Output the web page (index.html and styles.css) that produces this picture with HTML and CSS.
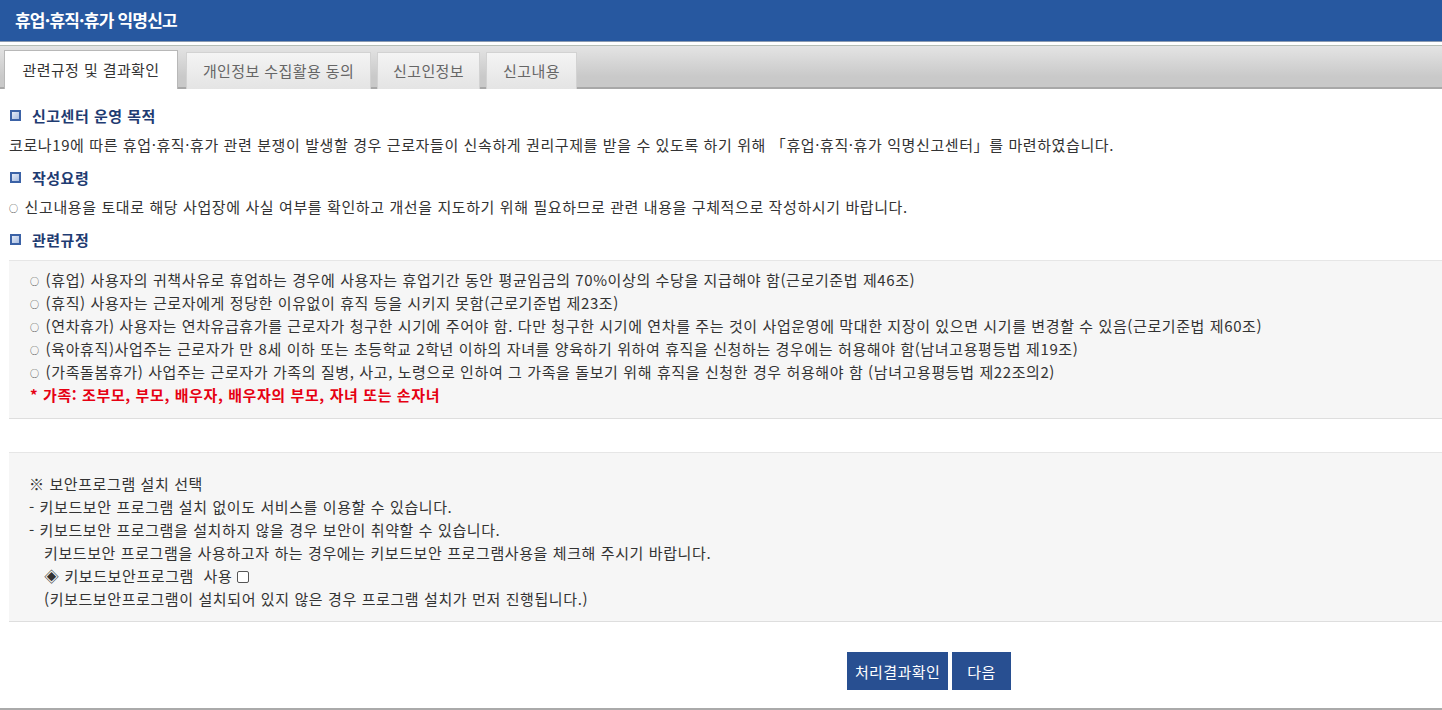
FILE: index.html
```html
<!DOCTYPE html>
<html lang="ko">
<head>
<meta charset="utf-8">
<title>휴업·휴직·휴가 익명신고</title>
<link rel="stylesheet" href="styles.css">
</head>
<body>
<header class="topbar">
  <h1 class="title">휴업·휴직·휴가 익명신고</h1>
</header>
<nav class="tabbar">
  <div class="tab active tab-1">관련규정 및 결과확인</div>
  <div class="tab tab-2">개인정보 수집활용 동의</div>
  <div class="tab tab-3">신고인정보</div>
  <div class="tab tab-4">신고내용</div>
</nav>
<main class="content">
  <h2 class="sec-title"><span class="sq"></span>신고센터 운영 목적</h2>
  <p class="para">코로나19에 따른 휴업·휴직·휴가 관련 분쟁이 발생할 경우 근로자들이 신속하게 권리구제를 받을 수 있도록 하기 위해 「휴업·휴직·휴가 익명신고센터」를 마련하였습니다.</p>
  <h2 class="sec-title"><span class="sq"></span>작성요령</h2>
  <p class="para"><span class="bul">○</span>신고내용을 토대로 해당 사업장에 사실 여부를 확인하고 개선을 지도하기 위해 필요하므로 관련 내용을 구체적으로 작성하시기 바랍니다.</p>
  <h2 class="sec-title"><span class="sq"></span>관련규정</h2>
  <div class="graybox rules">
    <p><span class="bul">○</span>(휴업) 사용자의 귀책사유로 휴업하는 경우에 사용자는 휴업기간 동안 평균임금의 70%이상의 수당을 지급해야 함(근로기준법 제46조)</p>
    <p><span class="bul">○</span>(휴직) 사용자는 근로자에게 정당한 이유없이 휴직 등을 시키지 못함(근로기준법 제23조)</p>
    <p><span class="bul">○</span>(연차휴가) 사용자는 연차유급휴가를 근로자가 청구한 시기에 주어야 함. 다만 청구한 시기에 연차를 주는 것이 사업운영에 막대한 지장이 있으면 시기를 변경할 수 있음(근로기준법 제60조)</p>
    <p><span class="bul">○</span>(육아휴직)사업주는 근로자가 만 8세 이하 또는 초등학교 2학년 이하의 자녀를 양육하기 위하여 휴직을 신청하는 경우에는 허용해야 함(남녀고용평등법 제19조)</p>
    <p><span class="bul">○</span>(가족돌봄휴가) 사업주는 근로자가 가족의 질병, 사고, 노령으로 인하여 그 가족을 돌보기 위해 휴직을 신청한 경우 허용해야 함 (남녀고용평등법 제22조의2)</p>
    <p class="red">* 가족: 조부모, 부모, 배우자, 배우자의 부모, 자녀 또는 손자녀</p>
  </div>
  <div class="graybox security">
    <p>※ 보안프로그램 설치 선택</p>
    <p>- 키보드보안 프로그램 설치 없이도 서비스를 이용할 수 있습니다.</p>
    <p>- 키보드보안 프로그램을 설치하지 않을 경우 보안이 취약할 수 있습니다.</p>
    <p class="indent">키보드보안 프로그램을 사용하고자 하는 경우에는 키보드보안 프로그램사용을 체크해 주시기 바랍니다.</p>
    <p class="indent">◈ 키보드보안프로그램&nbsp; 사용 <span class="chk"></span></p>
    <p class="indent">(키보드보안프로그램이 설치되어 있지 않은 경우 프로그램 설치가 먼저 진행됩니다.)</p>
  </div>
  <div class="actions">
    <button class="btn btn-wide">처리결과확인</button>
    <button class="btn btn-narrow">다음</button>
  </div>
</main>
</body>
</html>
```
FILE: styles.css
```css
* { box-sizing: border-box; }
html, body { margin: 0; padding: 0; }
body {
  width: 1442px;
  height: 710px;
  overflow: hidden;
  font-family: "Noto Sans CJK KR", "Noto Sans", sans-serif;
  font-size: 15px;
  letter-spacing: 0.6px;
  color: #333;
  background: #fff;
  border-bottom: 2px solid #aaa;
}
.topbar {
  height: 42px;
  background: #2758a0;
  border-bottom: 1px solid #8a9ab0;
  display: flex;
  align-items: center;
  padding-left: 15px;
}
.title {
  margin: 0;
  font-size: 17px;
  font-weight: bold;
  color: #fff;
  letter-spacing: -0.8px;
  padding-bottom: 2px;
}
.tabbar {
  margin-top: 3px;
  height: 44px;
  border-top: 1px solid #b5bdb5;
  border-bottom: 2px solid #a8a8a8;
  background: linear-gradient(#e4e4e4, #c9c9c9 75%);
  display: flex;
  align-items: flex-end;
  padding-left: 4px;
  gap: 6px;
}
.tab {
  height: 37px;
  margin-bottom: -2px;
  padding-bottom: 2px;
  display: flex;
  align-items: center;
  justify-content: center;
  background: linear-gradient(#f4f4f4, #e4e4e4);
  border: 1px solid #d2d2d2;
  border-bottom: none;
  color: #666;
  font-size: 15px;
  letter-spacing: 0.4px;
  white-space: nowrap;
}
.tab.active {
  background: #fff;
  color: #333;
  border-color: #b8b8b8;
  height: 39px;
  margin-right: 2px;
}
.tab-1 { width: 174px; }
.tab-2 { width: 185px; }
.tab-3 { width: 103px; }
.tab-4 { width: 91px; }
.content {
  padding: 14px 0 0 9px;
}
.sec-title {
  margin: 0;
  height: 24px;
  display: flex;
  align-items: center;
  gap: 11px;
  font-size: 15px;
  font-weight: bold;
  color: #1f3c72;
  padding-left: 1px;
  letter-spacing: 0.5px;
}
.sq {
  width: 11px;
  height: 11px;
  border: 2px solid #3b62a6;
  background: linear-gradient(135deg, #e4ebf7, #a9bde0);
}
.para {
  margin: 6px 0 8px;
  line-height: 24px;
}
.bul {
  font-size: 9px;
  line-height: 1;
  margin-right: 6px;
  vertical-align: 1px;
}
.graybox {
  background: #f6f6f6;
  border-top: 1px solid #e6e6e6;
  border-bottom: 1px solid #dedede;
}
.graybox p {
  margin: 0;
  line-height: 23px;
}
.rules {
  margin-top: 9px;
  padding: 7px 0 12px 21px;
}
.red {
  color: #e60012;
  font-weight: bold;
}
.security {
  margin-top: 33px;
  padding: 19px 0 11px 20px;
}
.indent {
  padding-left: 15px;
}
.chk {
  display: inline-block;
  width: 12px;
  height: 12px;
  border: 1px solid #555;
  border-radius: 2px;
  background: #fff;
  vertical-align: -1px;
}
.actions {
  display: flex;
  gap: 4px;
  padding-left: 838px;
  margin-top: 30px;
}
.btn {
  height: 38px;
  padding: 0;
  background: #284f91;
  color: #fff;
  border: none;
  font-family: inherit;
  font-size: 15px;
  letter-spacing: 0.4px;
}
.btn-wide { width: 101px; }
.btn-narrow { width: 59px; }
```
